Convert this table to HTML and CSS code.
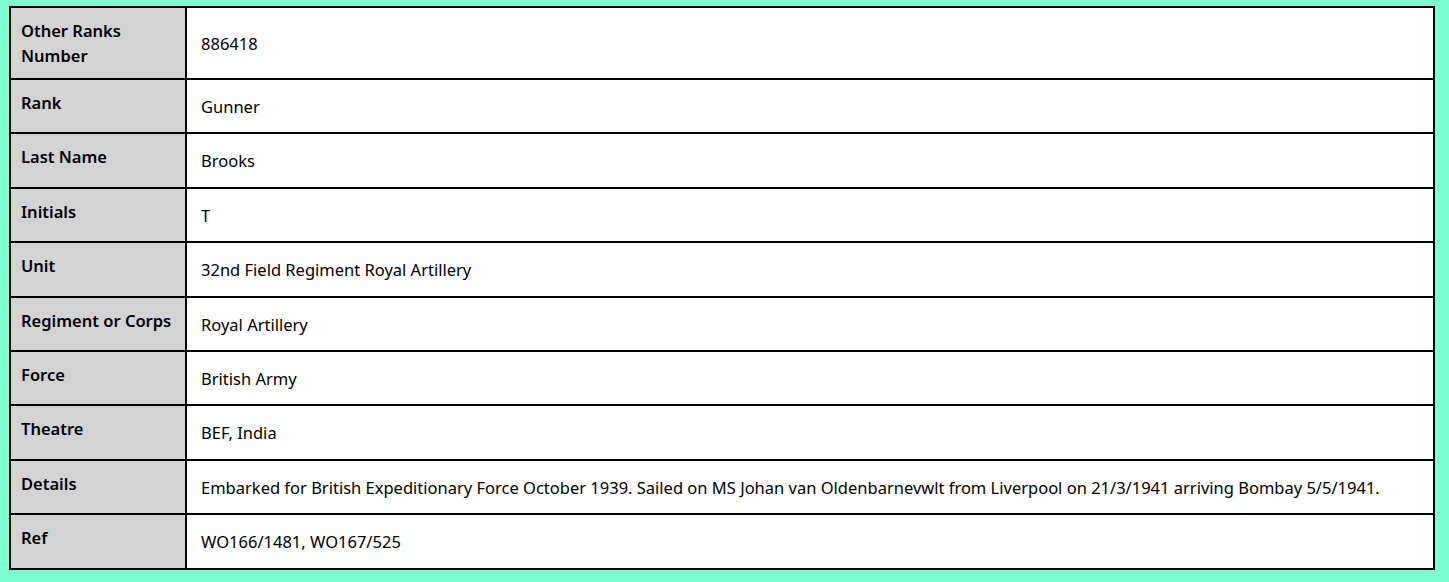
FILE: index.html
```html
<!DOCTYPE html>
<html lang="en">
<head>
<meta charset="utf-8">
<title>Service Record</title>
<link rel="stylesheet" href="styles.css">
</head>
<body>
<table class="record">
  <tr class="first"><th>Other Ranks Number</th><td>886418</td></tr>
  <tr><th>Rank</th><td>Gunner</td></tr>
  <tr><th>Last Name</th><td>Brooks</td></tr>
  <tr><th>Initials</th><td>T</td></tr>
  <tr><th>Unit</th><td>32nd Field Regiment Royal Artillery</td></tr>
  <tr><th>Regiment or Corps</th><td>Royal Artillery</td></tr>
  <tr><th>Force</th><td>British Army</td></tr>
  <tr><th>Theatre</th><td>BEF, India</td></tr>
  <tr><th>Details</th><td>Embarked for British Expeditionary Force October 1939. Sailed on MS Johan van Oldenbarnevwlt from Liverpool on 21/3/1941 arriving Bombay 5/5/1941.</td></tr>
  <tr><th>Ref</th><td>WO166/1481, WO167/525</td></tr>
</table>
</body>
</html>
```
FILE: styles.css
```css
html, body {
  background: #7fffd4;
}
body {
  margin: 6px 14px 0 9px;
  font-family: "Noto Sans", "Liberation Sans", sans-serif;
  font-size: 16.5px;
  color: #000;
}
.record {
  width: 1426px;
  border-collapse: collapse;
  background: #fff;
  border: 2px solid #000;
}
.record th,
.record td {
  border: 2px solid #000;
}
.record th {
  width: 154px;
  background: #d3d3d3;
  text-align: left;
  vertical-align: top;
  font-weight: 600;
  line-height: 25px;
  padding: 10px 10px 10px 10px;
}
.record td {
  line-height: 24.4px;
  padding: 15px 14px 13px;
  vertical-align: middle;
}
```
